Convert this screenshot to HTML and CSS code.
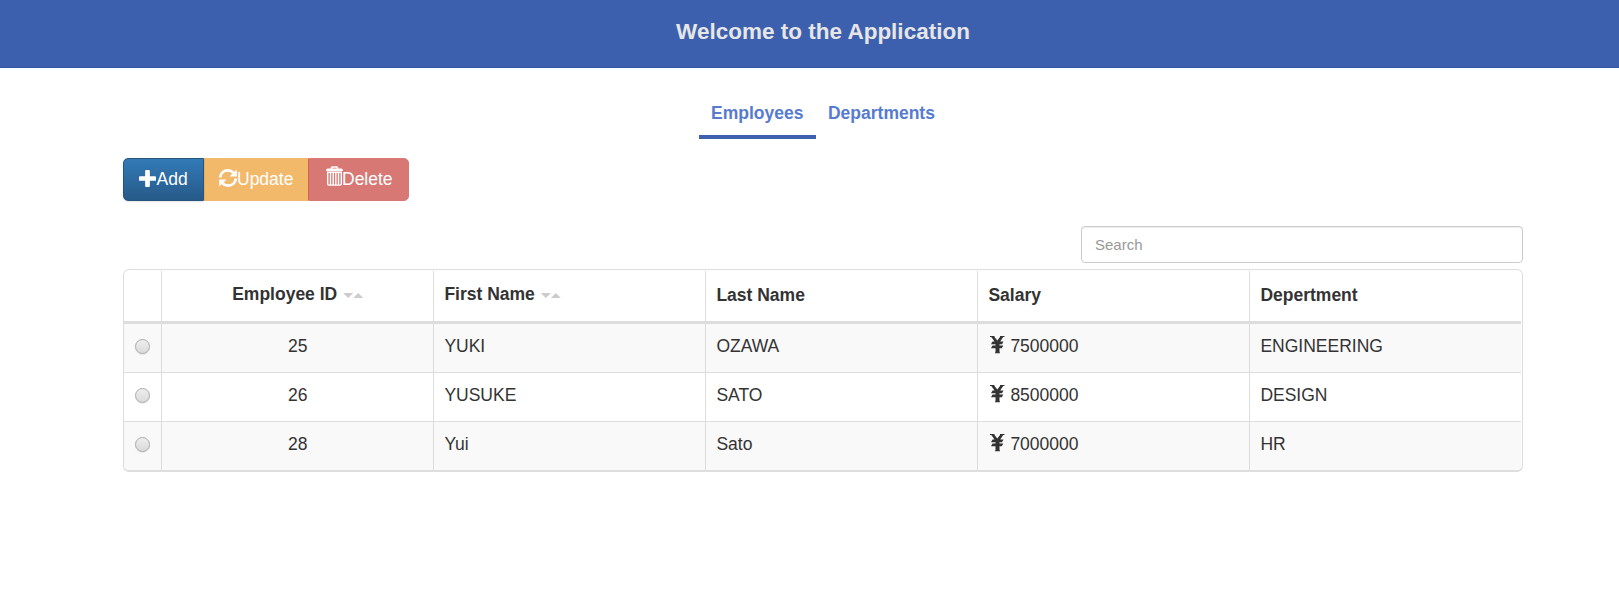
FILE: index.html
```html
<!DOCTYPE html>
<html lang="en">
<head>
<meta charset="utf-8">
<title>Welcome to the Application</title>
<link rel="stylesheet" href="styles.css">
</head>
<body>
<svg class="defs" width="0" height="0">
  <symbol id="yen" viewBox="0 0 15 18"><path d="M0 0H4.500V1L7.300 4.500 10 1V0H14.500V1H13.200L10.200 5.600H13.500L12 8.300H9.500V9.400H13.300L11.800 12.200H9.500V15.500L10 17.300H5L5.500 15.500V12.200H1L2.500 9.400H5.500V8.300H1L2.500 5.600H4.500L1.300 1H0Z"/></symbol>
</svg>
<header class="banner"><h1 class="banner-title">Welcome to the Application</h1></header>
<nav class="tabs">
  <a class="tab active">Employees</a>
  <a class="tab">Departments</a>
</nav>
<main class="content">
  <div class="actions">
    <button class="btn add"><svg class="icon" viewBox="0 0 18 18"><path d="M7.500 0h3q1 0 1 1v5.500H17q1 0 1 1v3q0 1-1 1h-5.500V17q0 1-1 1h-3q-1 0-1-1v-5.500H1q-1 0-1-1v-3q0-1 1-1h5.500V1q0-1 1-1z"/></svg>Add</button>
    <button class="btn update"><svg class="icon refresh" viewBox="0 0 18 18"><path class="line" d="M1.300 8.500C1.500 4.500 4.500 1.400 9 1.400c2.200 0 4 .9 5.500 2.400M16.700 9.500c-.2 4-3.200 7.100-7.700 7.100-2.200 0-4-.9-5.500-2.400"/><path d="M17.800.5V7.500H10.400zM.2 17.500v-7h7.400z"/></svg>Update</button>
    <button class="btn delete"><svg class="icon trash" viewBox="0 0 17 20"><path class="line" d="M5.500 3V1.800Q5.500 1 6.300 1h4.400q.8 0 .8 .8V3"/><path d="M1.500 2.500h14q1.500 0 1.500 2.500H0q0-2.500 1.500-2.500z"/><path class="thin" d="M1.700 6.300h13.600v11.500q0 1.300-1.300 1.300H3Q1.700 19.100 1.700 17.800zM4.500 6.500v12M7.200 6.500v12M9.800 6.500v12M12.500 6.500v12"/></svg>Delete</button>
  </div>
  <div class="search"><input class="search-input" type="text" placeholder="Search"></div>
  <div class="table">
    <div class="row head">
      <div class="cell"></div>
      <div class="cell center sortable">Employee ID<span class="sort"><i class="down"></i><i class="up"></i></span></div>
      <div class="cell sortable">First Name<span class="sort"><i class="down"></i><i class="up"></i></span></div>
      <div class="cell">Last Name</div><div class="cell">Salary</div><div class="cell">Depertment</div>
    </div>
    <div class="row odd">
      <div class="cell pick"><span class="radio"></span></div><div class="cell center">25</div><div class="cell">YUKI</div><div class="cell">OZAWA</div><div class="cell"><svg class="yen"><use href="#yen"/></svg>7500000</div><div class="cell">ENGINEERING</div>
    </div>
    <div class="row">
      <div class="cell pick"><span class="radio"></span></div><div class="cell center">26</div><div class="cell">YUSUKE</div><div class="cell">SATO</div><div class="cell"><svg class="yen"><use href="#yen"/></svg>8500000</div><div class="cell">DESIGN</div>
    </div>
    <div class="row odd">
      <div class="cell pick"><span class="radio"></span></div><div class="cell center">28</div><div class="cell">Yui</div><div class="cell">Sato</div><div class="cell"><svg class="yen"><use href="#yen"/></svg>7000000</div><div class="cell">HR</div>
    </div>
  </div>
</main>
</body>
</html>
```
FILE: styles.css
```css
* { box-sizing: border-box; }
body { margin: 0; background: #fff; color: #333; font: 17.5px/25px "Liberation Sans", Arial, sans-serif; }
.defs { display: block; }
.banner { height: 68px; padding-top: 15px; background: #3d60ae; border-bottom: 1px solid #3558a6; text-align: center; padding-left: 27px; }
.banner-title { margin: 0; font-size: 22.5px; line-height: 33px; color: #e6e6e6; }
.tabs { display: flex; justify-content: center; padding: 20px 0 0 27.5px; }
.tab { height: 51px; padding: 13px 12.5px 0 12px; border-bottom: 4px solid transparent; color: #567bd0; font-weight: bold; }
.tab.active { border-color: #3d60ae; }
.content { width: 1400px; margin: 19px 0 0 123px; }
.actions { display: flex; height: 43px; }
.btn { display: flex; align-items: center; padding: 0 0 0 15px; margin: 0; border: 1px solid; color: #fff; font: 17.5px "Liberation Sans", Arial, sans-serif; }
.add { width: 81px; background: linear-gradient(#337ab7, #265a88); border-color: #245580; border-radius: 5px 0 0 5px; box-shadow: 0 1px 2px rgba(0,0,0,.1); }
.update { width: 105px; padding-left: 14px; background: #f2b96b; border-color: #f2b96b #cf6846 #f2b96b #e8ab5c; }
.delete { width: 100px; padding-left: 16px; background: #d77875; border-color: #d77875; border-radius: 0 5px 5px 0; }
.icon { width: 18px; height: 18px; flex: none; fill: currentColor; margin-top: -4px; }
.add .icon { width: 17px; height: 17px; margin: -3px .5px 0 0; }
.delete .trash { width: 17px; height: 20px; margin: -7px -.5px 0 -.5px; }
.line, .thin { fill: none; stroke: currentColor; stroke-width: 2.700; }
.trash .line { stroke-width: 1.700; }
.thin { stroke-width: 1.400; }
.search { display: flex; justify-content: flex-end; margin-top: 25px; }
.search-input { width: 442px; height: 37px; padding: 0 13px; border: 1px solid #ccc; border-radius: 4px; box-shadow: inset 0 1px 1px rgba(0,0,0,.075); font: 15px "Liberation Sans", Arial, sans-serif; }
.search-input::placeholder { color: #999; opacity: 1; }
.table { margin-top: 6px; padding: 1px 1px 0 0; border: 1px solid #ddd; border-bottom-width: 2px; border-radius: 6px; overflow: hidden; }
.row { display: grid; grid-template-columns: 38px repeat(4, 272px) 1fr; height: 49px; border-bottom: 1px solid #ddd; }
.row.head { height: 53px; border-bottom-width: 3px; font-weight: bold; }
.row:last-child { height: 48px; border-bottom: 0; }
.odd { background: #f9f9f9; }
.cell { padding: 10px 10px 0 10.4px; border-right: 1px solid #ddd; }
.cell:last-child { border-right: 0; }
.head .cell { padding-top: 12px; }
.head .sortable { padding-top: 11px; }
.center { text-align: center; }
.row .pick { padding: 15px 0 0 11px; }
.radio { display: block; width: 15px; height: 15px; border: 1px solid #aaa; border-radius: 50%; background: linear-gradient(#eee, #dadada); box-shadow: 0 1px 1px rgba(0,0,0,.08); }
.sort { display: inline-flex; margin-left: 6px; vertical-align: 2px; }
.sort i { width: 10px; height: 5px; background: #ccc; }
.down { clip-path: polygon(0 0, 100% 0, 50% 100%); }
.up { clip-path: polygon(50% 0, 100% 100%, 0 100%); }
.yen { width: 15px; height: 18px; margin: 0 5.5px 0 1.5px; fill: #333; vertical-align: -2px; }
```
